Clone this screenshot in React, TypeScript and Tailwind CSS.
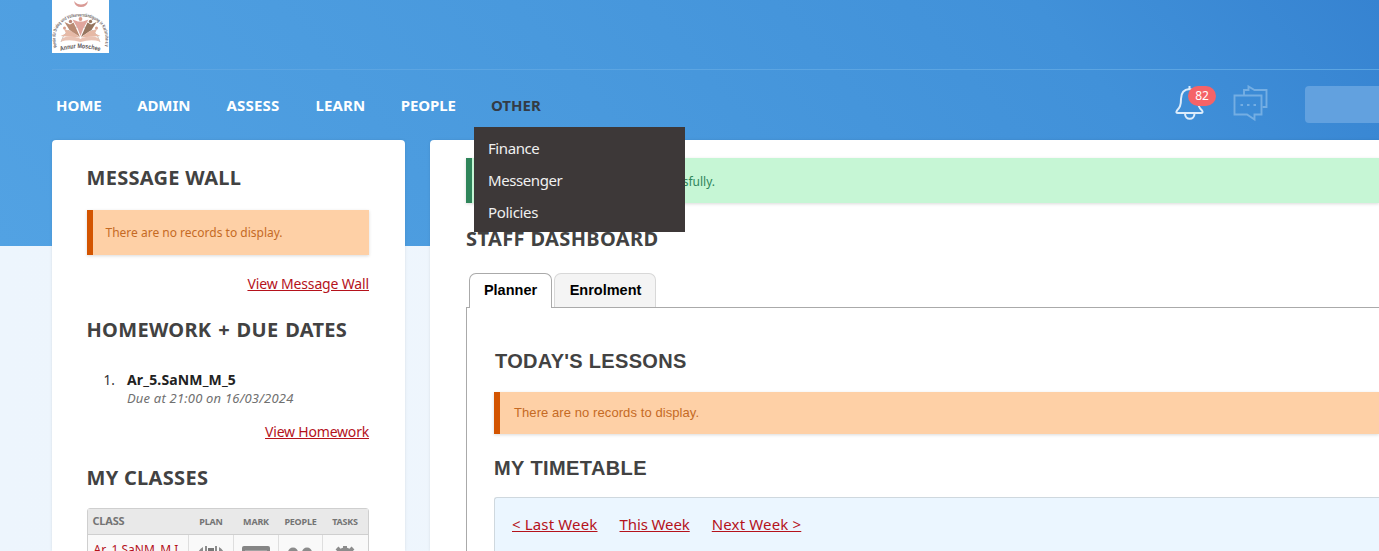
import React from "react";

const menuItems = [
  { label: "HOME", cls: "w-[46px] tracking-[-0.1px] text-white" },
  { label: "ADMIN", cls: "w-[54px] text-white" },
  { label: "ASSESS", cls: "w-[54px] tracking-[0.2px] text-white" },
  { label: "LEARN", cls: "w-[50px] tracking-[0.1px] text-white" },
  { label: "PEOPLE", cls: "w-[55px] text-white" },
];

const subMenu = [
  { label: "Finance", cls: "tracking-[-0.4px]" },
  { label: "Messenger", cls: "tracking-[-0.4px]" },
  { label: "Policies", cls: "tracking-[-0.3px]" },
];

function Logo() {
  return (
    <svg width="57" height="53" viewBox="0 0 57 53" className="block shrink-0 bg-white">
      <defs>
        <path id="arch" d="M5 47.500 C-1 27 12 16.500 28.500 16.500 C45 16.500 57 27 52.500 47.500" />
        <path id="base" d="M8.500 51 Q28 45 48.500 51.500" />
      </defs>
      <path d="M22 1 Q23 7 29 7 Q35 7 36 1 Q33 4.500 29 4.500 Q25 4.500 22 1Z" fill="#d99a95" />
      <path d="M9 42 A20 20 0 0 1 48 42" fill="none" stroke="#a89a94" strokeWidth="0.600" />
      <path d="M28 37.500 L8.500 36 L14 33.500 L12 29 L20 31.500Z" fill="#e6b9a6" />
      <path d="M28 37 L17.500 30 L12.500 22 L18 24.500 L21.500 22.500 L24 28Z" fill="#b98a72" />
      <path d="M28.500 36 L25.500 28 L20.500 19.500 L26 21.500 L31 21.500 L36.500 19.500 L31.500 28Z" fill="#e0a59d" />
      <path d="M29 37 L33 28 L35.500 22.500 L39 24.500 L44.500 22 L39.500 30Z" fill="#96755f" />
      <path d="M29 37.500 L37 31.500 L45 29 L43 33.500 L48.500 36Z" fill="#e6b9a6" />
      <path d="M9 41.500 Q10 36 19 36.500 Q26 37 28.500 39 Q31 37 38 36.500 Q47 36 48 41.500 Q39 39 28.500 42 Q18 39 9 41.500Z" fill="#e9c3b4" />
      <circle cx="28.500" cy="19" r="1.900" fill="#d99a8a" />
      <circle cx="18.500" cy="21.500" r="1.700" fill="#b98476" />
      <circle cx="38.500" cy="21.500" r="1.700" fill="#96755f" />
      <circle cx="12.500" cy="28" r="1.500" fill="#d9a08f" />
      <circle cx="44.500" cy="28" r="1.500" fill="#d9a08f" />
      <text fontSize="4.700" fontWeight="700" fill="#6a6264" fontFamily="Liberation Sans, sans-serif">
        <textPath href="#arch" textLength="92" lengthAdjust="spacingAndGlyphs">Verein für Dialog und Völkerverständigung in Karlsruhe e.V</textPath>
      </text>
      <text fontSize="6.500" fontWeight="700" fill="#5b5557" fontFamily="Liberation Sans, sans-serif">
        <textPath href="#base" textLength="40" lengthAdjust="spacingAndGlyphs">Annur Moschee</textPath>
      </text>
    </svg>
  );
}

function Bell() {
  return (
    <svg width="30" height="36" viewBox="0 0 30 36" fill="none" stroke="#dcecfb" strokeWidth="2" strokeLinejoin="round">
      <path d="M14.500 1 V4 C8 4.500 6 9 6 14 C6 21 4.500 22.500 2 25.500 C0.800 27.500 1.500 28 3 28 H26 C27.500 28 28 27 27 25.500 C24 22.500 23 21 23 14 C23 9 21 4.500 14.500 4" />
      <path d="M10 28.500 C10 35.500 19.500 35.500 19.500 28.500" />
    </svg>
  );
}

function Chat() {
  return (
    <svg width="36" height="37" viewBox="0 0 36 37" fill="none" stroke="#74aee3" strokeWidth="1.900">
      <path d="M11 10 V5 H15.500 V1.500 L21.500 5 H33.500 V22 H29.500" />
      <path d="M1.500 10.500 H28.500 V29.500 H21.500 V34.500 L14 29.500 H1.500Z" />
      <path d="M7.500 20 h2.500 M14 20 h2.500 M20.500 20 h2.500" strokeWidth="2.200" />
    </svg>
  );
}

function PlanIcon() {
  return (
    <svg width="28" height="24" viewBox="0 0 28 24" fill="#8c8c8c">
      <path d="M6 1 V10 H0 Q1 4 6 1Z M22 1 V10 H28 Q27 4 22 1Z" />
      <path d="M8 0 h2 v9 h-2Z M18 0 h2 v9 h-2Z" />
      <path d="M11 2 h6 v14 h-6Z" fill="#777" />
    </svg>
  );
}
function MarkIcon() {
  return (
    <svg width="28" height="24" viewBox="0 0 28 24">
      <rect x="0" y="0" width="28" height="20" rx="2" fill="#858585" />
      <rect x="3" y="4" width="22" height="1" fill="#a2a2a2" />
    </svg>
  );
}
function PeopleIcon() {
  return (
    <svg width="28" height="24" viewBox="0 0 28 24" fill="#8c8c8c">
      <circle cx="7" cy="6.500" r="5" />
      <circle cx="21" cy="6.500" r="5" />
      <path d="M0 21 Q0 12 7 12 Q14 12 14 21Z M14 21 Q14 12 21 12 Q28 12 28 21Z" />
    </svg>
  );
}
function TasksIcon() {
  return (
    <svg width="28" height="24" viewBox="0 0 28 24">
      <circle cx="14" cy="9.500" r="6" fill="none" stroke="#8c8c8c" strokeWidth="4" />
      <path d="M14 -1 V5 M6 2 L10 6 M22 2 L18 6" stroke="#8c8c8c" strokeWidth="4" />
    </svg>
  );
}

function Sidebar() {
  return (
    <aside className="h-[411px] w-[353px] shrink-0 overflow-hidden rounded-t-[4px] bg-white pt-[26px] pr-[36px] pl-[34.5px] shadow-[0_0_3px_rgba(0,0,0,0.1)]">
      <h2 className="text-[20px] leading-[24px] font-bold tracking-[0.3px] text-[#424242]">MESSAGE WALL</h2>
      <div className="mt-[20px] flex h-[45px] items-center border-l-[6px] border-[#d35400] bg-[#fed0a6] pl-[13px] text-[12px] tracking-[0px] text-[#c56a24] shadow-[0_1px_3px_rgba(0,0,0,0.15)]">
        There are no records to display.
      </div>
      <p className="mt-[19px] text-right text-[14px] leading-[20px] tracking-[-0.15px] text-[#b5121b]">
        <a className="underline">View Message Wall</a>
      </p>
      <h2 className="mt-[24px] text-[20px] leading-[24px] font-bold tracking-[0.3px] whitespace-nowrap text-[#424242] [word-spacing:1.2px]">HOMEWORK + DUE DATES</h2>
      <div className="mt-[28px] flex">
        <span className="w-[40.5px] pl-[17px] text-[13.5px] leading-[20px] text-[#333]">1.</span>
        <div>
          <div className="text-[14px] leading-[19px] font-bold tracking-[0.15px] text-[#222]">Ar_5.SaNM_M_5</div>
          <div className="text-[13px] leading-[19px] tracking-[0.2px] text-[#707070] italic">Due at 21:00 on 16/03/2024</div>
        </div>
      </div>
      <p className="mt-[14px] text-right text-[14px] leading-[20px] tracking-[-0.2px] text-[#b5121b]">
        <a className="underline">View Homework</a>
      </p>
      <h2 className="mt-[24px] text-[20px] leading-[24px] font-bold tracking-[0.3px] text-[#424242]">MY CLASSES</h2>
      <div className="mt-[18px] h-[60px] w-[282px] rounded-t-[3px] border border-[#cfcfcf] bg-[#f9f9f9]">
        <div className="grid h-[26px] grid-cols-[101px_45px_45px_44px_45px] items-center border-b border-[#cfcfcf] bg-[#e9e9e9] text-center text-[9px] font-bold tracking-[-0.2px] text-[#747474]">
          <span className="pl-[5px] text-left text-[11px]">CLASS</span>
          <span>PLAN</span>
          <span>MARK</span>
          <span>PEOPLE</span>
          <span>TASKS</span>
        </div>
        <div className="grid h-[33px] grid-cols-[101px_45px_45px_44px_45px] divide-x divide-[#dedede] [&>span]:flex [&>span]:justify-center [&>span]:pt-[11px]">
          <div className="pt-[5px] pl-[6px] text-[12px] leading-[20px] whitespace-nowrap text-[#b5121b]">Ar_1.SaNM_M.I</div>
          <span><PlanIcon /></span>
          <span><MarkIcon /></span>
          <span><PeopleIcon /></span>
          <span><TasksIcon /></span>
        </div>
      </div>
    </aside>
  );
}

function Dashboard() {
  return (
    <main className="h-[411px] w-[949px] shrink-0 overflow-hidden rounded-tl-[4px] bg-white pt-[18px] pl-[36px] shadow-[0_0_3px_rgba(0,0,0,0.1)]">
      <div className="flex h-[45px] items-center border-l-[6px] border-[#2f855a] bg-[#c6f6d5] text-[12px] text-[#2f855a] shadow-[0_1px_3px_rgba(0,0,0,0.15)]">
        <span className="w-[243px] pt-[2px] text-right whitespace-nowrap">Your request was completed successfully.</span>
      </div>
      <h2 className="mt-[24px] text-[20px] leading-[24px] font-bold tracking-[0.38px] text-[#424242]">STAFF DASHBOARD</h2>
      <div className="mt-[22px] flex h-[34px] gap-[2px] pl-[3px] font-['Liberation_Sans',sans-serif] text-[14.5px] font-bold text-black">
        <div className="z-10 flex h-[35px] w-[83px] justify-center rounded-t-[7px] border border-b-0 border-[#aaa] bg-white pt-[6px] leading-[20px]">Planner</div>
        <div className="flex h-[34px] w-[102px] justify-center rounded-t-[7px] border border-b-0 border-[#d8d8d8] bg-[#f4f4f4] pt-[6px] pl-px leading-[20px]">Enrolment</div>
      </div>
      <section className="h-[260px] border-t border-l border-[#aaa] pt-[41px] pl-[27px]">
        <h2 className="pl-px font-['Liberation_Sans',sans-serif] text-[20px] leading-[24px] font-bold tracking-[0.3px] text-[#424242]">TODAY'S LESSONS</h2>
        <div className="mt-[19px] flex h-[42px] items-center border-l-[6px] border-[#d35400] bg-[#fed0a6] pl-[14px] font-['Liberation_Sans',sans-serif] text-[13px] tracking-[0.08px] text-[#c56a24] shadow-[0_1px_3px_rgba(0,0,0,0.15)]">
          There are no records to display.
        </div>
        <h2 className="mt-[22px] font-['Liberation_Sans',sans-serif] text-[20px] leading-[24px] font-bold tracking-[0.4px] text-[#424242]">MY TIMETABLE</h2>
        <div className="mt-[17px] flex h-[80px] gap-[22px] rounded-tl-[3px] border-t border-l border-[#cfd8de] bg-[#ebf6ff] pt-[16px] pl-[17px] text-[15px] leading-[20px] text-[#b5121b]">
          <a className="tracking-[0.15px] underline">&lt; Last Week</a>
          <a className="tracking-[-0.1px] underline">This Week</a>
          <a className="tracking-[0.15px] underline">Next Week &gt;</a>
        </div>
      </section>
    </main>
  );
}

export default function App() {
  return (
    <div className="h-[551px] w-[1379px] overflow-hidden bg-[linear-gradient(50deg,#52a2e3_0%,#4999dd_45%,#4191d9_78%,#3683d1_100%)] bg-[length:100%_246px] bg-no-repeat font-['Noto_Sans',sans-serif]">
      <div className="h-full bg-[linear-gradient(90deg,#edf5fd,#f1f7fd)] bg-[length:100%_305px] bg-[position:0_246px] bg-no-repeat">
        <div className="flex h-[70px] flex-col justify-between pl-[51.5px]">
          <Logo />
          <div className="h-px bg-[#5ca5e2]" />
        </div>
        <header className="flex h-[70px] pl-[56px]">
          <nav className="flex w-[1119px] shrink-0 gap-[35.2px] pt-[24px] text-[15px] leading-[22px] font-bold tracking-[-0.1px]">
            {menuItems.map((m) => (
              <a key={m.label} className={m.cls}>{m.label}</a>
            ))}
            <div className="relative z-20">
              <a className="tracking-[0px] text-[#333b45]">OTHER</a>
              <div className="absolute top-[33px] left-[-17px] h-[105px] w-[211px] bg-[#3d3838] pt-[5px] pl-[14px] text-[15px] leading-[32px] font-normal text-[#f0f0f0]">
                {subMenu.map((s) => (
                  <div key={s.label} className={s.cls}>{s.label}</div>
                ))}
              </div>
            </div>
          </nav>
          <div className="relative mt-[15px] h-[36px] w-[30px] shrink-0">
            <Bell />
            <span className="absolute top-[1px] left-[13px] flex h-[20px] w-[28px] items-center justify-center rounded-full bg-[#f56368] text-[12px] text-white">82</span>
          </div>
          <div className="mt-[15px] ml-[28px] shrink-0">
            <Chat />
          </div>
          <div className="mt-[16px] ml-[36px] h-[37px] w-[90px] shrink-0 rounded-l-[4px] bg-[#62a1df]" />
        </header>
        <div className="flex gap-[25px] pl-[52px]">
          <Sidebar />
          <Dashboard />
        </div>
      </div>
    </div>
  );
}
